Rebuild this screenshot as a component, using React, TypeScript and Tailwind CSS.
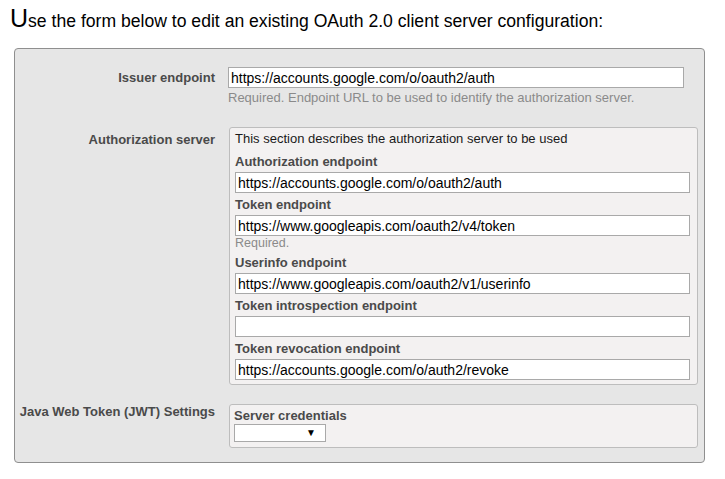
export default function App() {
  const field =
    "block w-full h-[21px] border border-[#a9a9a9] bg-white px-[2px] text-[14px] leading-[19px] text-black outline-none"

  const Label = ({ children }: { children: string }) => (
    <div className="h-[22px] pt-[2px] text-[13px] leading-[20px] font-bold text-[#4a4a4a]">{children}</div>
  )

  return (
    <div className="w-[725px] h-[479px] bg-white text-black" style={{ fontFamily: '"Liberation Sans", Arial, sans-serif' }}>
      {/* heading */}
      <div className="pl-[10px] pt-[6px] h-[48px] text-[17.6px] leading-[24px] text-black">
        <span className="text-[25px]">U</span>se the form below to edit an existing OAuth 2.0 client server configuration:
      </div>

      {/* panel */}
      <div className="ml-[14px] w-[691px] rounded-[4px] border border-[#8f8f8f] bg-[#e6e6e6] pt-[18px] pb-[14px]">
        {/* issuer */}
        <div className="flex">
          <div className="w-[200px] text-right text-[13px] font-bold leading-[21px] text-[#4a4a4a]">Issuer endpoint</div>
          <div className="ml-[13px] w-[456px]">
            <input className={field} defaultValue="https://accounts.google.com/o/oauth2/auth" readOnly />
            <div className="pt-[1px] text-[13px] leading-[17px] text-[#8a8a8a]">
              Required. Endpoint URL to be used to identify the authorization server.
            </div>
          </div>
        </div>

        {/* authorization server */}
        <div className="mt-[21px] flex">
          <div className="w-[200px] pt-[3px] text-right text-[13px] font-bold leading-[20px] text-[#4a4a4a]">Authorization server</div>
          <div className="ml-[14px] w-[469px] rounded-[3px] border border-[#bdbdbd] bg-[#f3f1f1] pl-[5px] pr-[7px] pb-[4px]">
            <div className="h-[22px] text-[13px] leading-[22px] text-[#1a1a1a]">This section describes the authorization server to be used</div>
            <Label>Authorization endpoint</Label>
            <input className={field} defaultValue="https://accounts.google.com/o/oauth2/auth" readOnly />
            <Label>Token endpoint</Label>
            <input className={field} defaultValue="https://www.googleapis.com/oauth2/v4/token" readOnly />
            <div className="h-[15px] text-[12.5px] leading-[15px] text-[#8a8a8a]">Required.</div>
            <Label>Userinfo endpoint</Label>
            <input className={field} defaultValue="https://www.googleapis.com/oauth2/v1/userinfo" readOnly />
            <Label>Token introspection endpoint</Label>
            <input className={field} defaultValue="" readOnly />
            <Label>Token revocation endpoint</Label>
            <input className={field} defaultValue="https://accounts.google.com/o/auth2/revoke" readOnly />
          </div>
        </div>

        {/* jwt */}
        <div className="mt-[19px] flex">
          <div className="w-[200px] text-right text-[13px] font-bold leading-[16px] text-[#4a4a4a]">Java Web Token (JWT) Settings</div>
          <div className="ml-[14px] w-[469px] rounded-[3px] border border-[#bdbdbd] bg-[#f3f1f1] pl-[4px] pr-[7px] pb-[5px]">
            <div className="h-[19px] pt-[3px] text-[13px] leading-[16px] font-bold text-[#4a4a4a]">Server credentials</div>
            <div className="flex h-[18px] w-[92px] items-center justify-end border border-[#a9a9a9] bg-white pr-[9px]">
              <span className="text-[10px] leading-none text-black">▼</span>
            </div>
          </div>
        </div>
      </div>
    </div>
  )
}
